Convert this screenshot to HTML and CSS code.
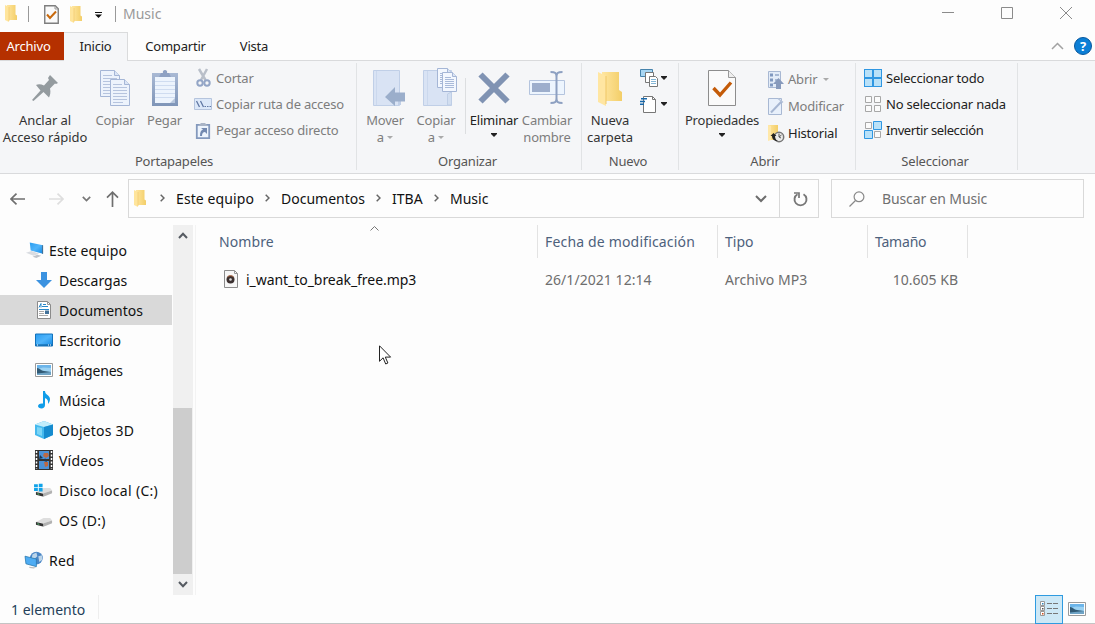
FILE: index.html
```
<!DOCTYPE html>
<html lang="es">
<head>
<meta charset="utf-8">
<title>Music</title>
<link rel="stylesheet" href="styles.css">
</head>
<body>
<svg class="defs" width="0" height="0" aria-hidden="true">
  <defs>
    <linearGradient id="gFold" x1="0" x2="1"><stop offset="0" stop-color="#ffe6a0"/><stop offset="1" stop-color="#f3ce68"/></linearGradient>
    <linearGradient id="gBlue" x1="0" y1="0" x2="1" y2="1"><stop offset="0" stop-color="#2a9df0"/><stop offset=".5" stop-color="#4fb4fb"/><stop offset="1" stop-color="#1187e2"/></linearGradient>
    <linearGradient id="gClip" x1="0" y1="0" x2="0" y2="1"><stop offset="0" stop-color="#a9b9d4"/><stop offset="1" stop-color="#7f95b8"/></linearGradient>
    <symbol id="folder" viewBox="0 0 14 18"><path d="M3 1h8.500v9.500l1.500 1V16H3z" fill="url(#gFold)"/><path d="M1 1l4 2v15l-4-2z" fill="#ffe59c"/><path d="M5 3v14" stroke="#eec565" stroke-width=".6"/></symbol>
    <symbol id="page" viewBox="0 0 20 27"><path d="M.5.500h14l5 5v21H.5z" fill="#edf3fc" stroke="#a5b6d6"/><path d="M14.500.500v5h5" fill="#dbe5f5" stroke="#a5b6d6"/><path d="M3 5.500h9M3 8.500h14M3 11.500h14M3 14.500h14M3 17.500h14M3 20.500h14M3 23.500h10" stroke="#b6c4de"/></symbol>
    <symbol id="pageSmall" viewBox="0 0 15 20"><path d="M.5.500h10l4 4v15H.5z" fill="#f3f7fe" stroke="#a5b6d6"/><path d="M10.500.500v4h4" fill="#dbe5f5" stroke="#a5b6d6"/><path d="M3 5.500h6M3 7.500h9M3 9.500h9M3 11.500h9M3 13.500h9M3 15.500h9" stroke="#a9bad9"/></symbol>
    <symbol id="picture" viewBox="0 0 18 14"><path d="M.5.500h17v13H.5z" fill="#fff" stroke="#9a9a9a"/><path d="M2 2h14v10H2z" fill="#9bd2f3"/><path d="M2 2h14v3L8 4.500 2 6z" fill="#6cb5ea"/><path d="M2 5c3 0 4 3 7 3l7 1v3H2z" fill="#315a75"/><path d="M2 10.500l14-1.500v3H2z" fill="#6fa4c6"/></symbol>
    <symbol id="drive" viewBox="0 0 19 10"><path d="M1 5l8-4h7l2 2.500-9 3z" fill="#dedede"/><path d="M1 5l8 2v3l-8-2z" fill="#333"/><path d="M9 6.500l9-3v3L9 10z" fill="#b2b2b2"/><path d="M2.500 7l2 .5" stroke="#57d27d"/></symbol>
  </defs>
</svg>
<div class="window">
  <header class="titlebar">
    <svg class="tb-folder" width="14" height="18"><use href="#folder"/></svg>
    <i class="tb-line"></i>
    <svg class="tb-props" width="15" height="19" viewBox="0 0 15 19"><path d="M.75.75h10.500l3 3v14.500H.75z" fill="#fafafa" stroke="#7e7e7e" stroke-width="1.400"/><path d="M11 1v3h3" fill="none" stroke="#999"/><path d="M3 9.500l3 3.500 6-6.500" fill="none" stroke="#c8690c" stroke-width="2"/></svg>
    <svg class="tb-folder2" width="14" height="18"><use href="#folder"/></svg>
    <svg class="tb-more" width="7" height="6" viewBox="0 0 7 6"><path d="M0 .5h7" stroke="#111"/><path d="M0 2.500h7L3.500 6z" fill="#111"/></svg>
    <i class="tb-line tb-line2"></i>
    <span class="tb-title">Music</span>
    <div class="controls">
      <svg width="12" height="13" viewBox="0 0 12 13"><path d="M0 5.500h12" stroke="#8b8b8b"/></svg>
      <svg width="12" height="12" viewBox="0 0 12 12"><path d="M.5.500h11v11H.5z" fill="none" stroke="#8b8b8b"/></svg>
      <svg width="12" height="12" viewBox="0 0 12 12"><path d="M0 0l12 12M12 0L0 12" stroke="#8b8b8b"/></svg>
    </div>
  </header>

  <nav class="tabs">
    <span class="tab tab-file">Archivo</span>
    <span class="tab tab-active">Inicio</span>
    <span class="tab tab-share">Compartir</span>
    <span class="tab tab-view">Vista</span>
    <div class="tabs-end">
      <svg width="13" height="8" viewBox="0 0 13 8"><path d="M1 7l5.500-5.500L12 7" fill="none" stroke="#a2a2a2" stroke-width="1.500"/></svg>
      <span class="help">?</span>
    </div>
  </nav>

  <section class="ribbon">
    <div class="group g-clip">
      <div class="tools">
        <div class="big w90">
          <svg class="ico" width="26" height="38" viewBox="0 0 26 38"><path d="M18 7l8 8-2 1-1-.5-5 5c1 4 0 7-1 9l-5.500-5.500L1.500 33 0 32l8.500-9.500L4 17c2-1 5-1 8 .5l5-5.500-1-2z" fill="#949b9f"/></svg>
          <span class="wide">Anclar al<br>Acceso rápido</span>
        </div>
        <div class="big dim w50">
          <svg class="ico" width="31" height="38" viewBox="0 0 31 38"><use href="#page" x="0" y="2" width="20" height="27"/><use href="#page" x="10" y="11" width="20" height="27"/></svg>
          <span>Copiar</span>
        </div>
        <div class="big dim w49">
          <svg class="ico" width="26" height="38" viewBox="0 0 26 38"><path d="M0 5h26v33H0z" fill="url(#gClip)"/><path d="M3 9h20v26H3z" fill="#edf4fd"/><path d="M3 13.500h20M3 17.500h20M3 21.500h20M3 25.500h20M3 29.500h20" stroke="#cfdcf0"/><path d="M18 35l5-5v5z" fill="#b8c7dd"/><path d="M7 9l2-4h2a2.200 2.200 0 1 1 4 0h2l2 4z" fill="#8ea1c3"/></svg>
          <span>Pegar</span>
        </div>
        <div class="rows dim clip-rows">
          <div class="row"><svg width="18" height="20" viewBox="0 0 18 20"><path d="M5 1l6.500 11M13 1L7 12" stroke="#b9bfc9" stroke-width="2.500"/><circle cx="6" cy="15" r="2.700" fill="none" stroke="#93a5c6" stroke-width="2"/><circle cx="13" cy="15" r="2.700" fill="none" stroke="#93a5c6" stroke-width="2"/></svg><span>Cortar</span></div>
          <div class="row"><svg width="18" height="12" viewBox="0 0 18 12"><path d="M.5.500h17v11H.5z" fill="#dce8f9" stroke="#b5c4dd"/><path d="M2.500 3l3 6M6.500 3l3 6" stroke="#6178a4" stroke-width="1.300"/><path d="M10.500 8.500h1.500m1 0h1.500m1 0H17" stroke="#6178a4"/></svg><span>Copiar ruta de acceso</span></div>
          <div class="row"><svg width="18" height="19" viewBox="0 0 18 19"><path d="M2.800 3.800h12.400v13.400H2.800z" fill="#edf4fd" stroke="#8499bd" stroke-width="1.800"/><path d="M5 4l2-2h4l2 2v1H5z" fill="#a9b4c6"/><path d="M6 15c0-4 1-6 3-6.500L7 7h6v6l-2-2c-2 0-3 1.500-3 4z" fill="#7389b0"/></svg><span>Pegar acceso directo</span></div>
        </div>
      </div>
      <div class="caption cap-clip">Portapapeles</div>
    </div>

    <div class="group g-org">
      <div class="tools">
        <div class="big dim w50">
          <svg class="ico shift" width="34" height="38" viewBox="0 0 34 38"><path d="M1.500 2.500h26v35h-26z" fill="#d9e3f4" stroke="#c0cfe7"/><path d="M4.500 3v34" stroke="#cbd8ed"/><path d="M27.500 25v12" stroke="#c0cfe7" stroke-width="3"/><path d="M13 29l10-10v5.500h10v9H23V38z" fill="#9baecb"/></svg>
          <span>Mover<br>a <svg class="arr" width="6" height="3" viewBox="0 0 6 3"><path d="M0 0h6L3 3z" fill="#aaa"/></svg></span>
        </div>
        <div class="big dim w52">
          <svg class="ico shift" width="34" height="38" viewBox="0 0 34 38"><path d="M.5 2.500h28v35H.5z" fill="#d9e3f4" stroke="#c0cfe7"/><path d="M4.500 3v34" stroke="#cbd8ed"/><path d="M24.500 37V26l4-2v13z" fill="#d2def0" stroke="#bfcee6"/><use href="#pageSmall" x="14" y="0" width="15" height="20"/><use href="#pageSmall" x="19" y="4" width="15" height="20"/></svg>
          <span>Copiar<br>a <svg class="arr" width="6" height="3" viewBox="0 0 6 3"><path d="M0 0h6L3 3z" fill="#aaa"/></svg></span>
        </div>
        <i class="sep"></i>
        <div class="big w52 black">
          <svg class="ico" width="32" height="38" viewBox="0 0 32 38"><path d="M2.500 6.500l27 27M29.500 6.500l-27 27" stroke="#8093b3" stroke-width="6"/></svg>
          <span>Eliminar<br><svg class="arr arr-b" width="6" height="4" viewBox="0 0 6 4"><path d="M0 0h6v1L3 4 0 1z" fill="#222"/></svg></span>
        </div>
        <div class="big dim w54">
          <svg class="ico" width="36" height="38" viewBox="0 0 36 38"><path d="M.5 12.500h35v14H.5z" fill="#edf5fe" stroke="#b4c4de"/><path d="M3 15h18v9H3z" fill="#9daecc"/><path d="M21.500 4c5 0 6 1 6 5v21c0 4-1 5-6 5M33.500 4c-5 0-6 1-6 5v21c0 4 1 5 6 5" fill="none" stroke="#8da0c1" stroke-width="2"/></svg>
          <span>Cambiar<br>nombre</span>
        </div>
      </div>
      <div class="caption">Organizar</div>
    </div>

    <div class="group g-new">
      <div class="tools">
        <div class="big w56">
          <svg class="ico" width="25" height="38" viewBox="0 0 25 38"><path d="M4 4h17v18l3 2v9H4z" fill="url(#gFold)"/><path d="M0 4l8 4v30l-8-4z" fill="#ffe6a2"/><path d="M8 8v28" stroke="#efc766"/></svg>
          <span class="wide">Nueva<br>carpeta</span>
        </div>
        <div class="new-rows">
          <div class="row"><svg width="19" height="19" viewBox="0 0 19 19"><path d="M.5.500h12v7H.5z" fill="#a8d6f3" stroke="#4683ac"/><path d="M5.500 3.500h8v10h-8z" fill="#fff" stroke="#777"/><path d="M9.500 7.500h6l2 2v8h-8z" fill="#fff" stroke="#777"/><path d="M11 10.500h5m-5 2h5m-5 2h5" stroke="#83b6d7"/></svg><svg class="arr" width="6" height="4" viewBox="0 0 6 4"><path d="M0 0h6v1L3 4 0 1z" fill="#222"/></svg></div>
          <div class="row"><svg width="19" height="19" viewBox="0 0 19 19"><path d="M3.500 1.500h9l3 3v13h-12z" fill="#fff" stroke="#777"/><path d="M12.500 1.500v3h3" fill="none" stroke="#777"/><path d="M1 3.700h6M0 6.500h5M-1 9.200h5" stroke="#1769ac" stroke-width="1.500"/></svg><svg class="arr" width="6" height="4" viewBox="0 0 6 4"><path d="M0 0h6v1L3 4 0 1z" fill="#222"/></svg></div>
        </div>
      </div>
      <div class="caption cap-new">Nuevo</div>
    </div>

    <div class="group g-open">
      <div class="tools">
        <div class="big w86">
          <svg class="ico" width="28" height="38" viewBox="0 0 28 38"><path d="M.5 2.500h20l7 7v28H.5z" fill="#fafafa" stroke="#8d8d8d"/><path d="M20.500 2.500v7h7" fill="#eee" stroke="#999"/><path d="M5.500 20l6.500 7L23 14.500" fill="none" stroke="#c45b08" stroke-width="3.400"/></svg>
          <span>Propiedades<br><svg class="arr arr-b" width="6" height="4" viewBox="0 0 6 4"><path d="M0 0h6v1L3 4 0 1z" fill="#222"/></svg></span>
        </div>
        <div class="rows open-rows">
          <div class="row dim"><svg width="18" height="19" viewBox="0 0 18 19"><path d="M1.500 1.500h12v16h-12z" fill="#e3ecf8" stroke="#a8b8d3"/><path d="M3 3.500h3v3H3zm0 5h3v3H3zm0 5h3v3H3z" fill="#8098bf"/><path d="M8 5h4M8 10h4" stroke="#92a6c7" stroke-width="1.500"/><path d="M9 19v-5H6l5.500-6 5.500 6h-3v5z" fill="#879abc"/></svg><span>Abrir</span><svg class="arr arr-open" width="6" height="3" viewBox="0 0 6 3"><path d="M0 0h6L3 3z" fill="#aaa"/></svg></div>
          <div class="row dim"><svg width="18" height="19" viewBox="0 0 18 19"><path d="M1.500 1.500h13v16h-13z" fill="#e8f0fb" stroke="#a8b8d3"/><path d="M4 15.500L15 4" stroke="#a6b6d2" stroke-width="2"/><path d="M11 1.500l5 4" stroke="#b5c3da" stroke-width="1.500"/></svg><span>Modificar</span></div>
          <div class="row black"><svg width="18" height="19" viewBox="0 0 18 19"><path d="M1 1h10v15H1z" fill="url(#gFold)"/><path d="M1 1l3 1v14l-3 1z" fill="#ffe8a9"/><circle cx="12" cy="13" r="4.700" fill="#ebebeb" stroke="#757575" stroke-width="1.500"/><path d="M12 9.500V13l2.500-2M12 13l2 1" stroke="#555" fill="none"/><path d="M3.500 12l3-3 3 3H8c0 3 1 4 3 5-4 0-6-2-6-5z" fill="#222"/></svg><span>Historial</span></div>
        </div>
      </div>
      <div class="caption">Abrir</div>
    </div>

    <div class="group g-sel">
      <div class="tools">
        <div class="rows black">
          <div class="row"><svg width="18" height="18" viewBox="0 0 18 18"><path d="M0 0h18v18H0z" fill="#2f97e2"/><path d="M1 1h7v7H1zm9 0h7v7h-7zm-9 9h7v7H1zm9 0h7v7h-7z" fill="#b9e1f8"/></svg><span>Seleccionar todo</span></div>
          <div class="row"><svg width="18" height="18" viewBox="0 0 18 18"><path d="M1.500 1.500h6v6h-6zm9 0h6v6h-6zm-9 9h6v6h-6zm9 0h6v6h-6z" fill="#fbfbfb" stroke="#a7a7a7"/></svg><span>No seleccionar nada</span></div>
          <div class="row"><svg width="18" height="18" viewBox="0 0 18 18"><path d="M1.500 1.500h6v6h-6zm9 9h6v6h-6z" fill="#fbfbfb" stroke="#a7a7a7"/><path d="M9.500.500h8v8h-8zM.5 9.500h8v8h-8z" fill="#b9e1f8" stroke="#2f97e2"/></svg><span class="sp-inv">Invertir selección</span></div>
        </div>
      </div>
      <div class="caption">Seleccionar</div>
    </div>
  </section>

  <section class="address">
    <div class="nav-buttons">
      <svg width="15" height="12" viewBox="0 0 15 12"><path d="M15 6H1m5.500-5.300L1 6l5.500 5.300" fill="none" stroke="#6f6f6f" stroke-width="1.700"/></svg>
      <svg class="fwd" width="15" height="12" viewBox="0 0 15 12"><path d="M0 6h14M8.500.700L14 6l-5.500 5.300" fill="none" stroke="#dedede" stroke-width="1.700"/></svg>
      <svg class="recent" width="9" height="6" viewBox="0 0 9 6"><path d="M.8.800l3.700 3.700L8.200.800" fill="none" stroke="#777" stroke-width="1.700"/></svg>
      <svg class="up" width="13" height="16" viewBox="0 0 13 16"><path d="M6.500 16V1.200M1 6.700l5.500-5.500L12 6.700" fill="none" stroke="#6f6f6f" stroke-width="1.700"/></svg>
    </div>
    <div class="path">
      <svg class="path-folder" width="14" height="18"><use href="#folder"/></svg>
      <svg class="chev" width="5" height="8" viewBox="0 0 5 8"><path d="M.7.700L4 4 .7 7.300" fill="none" stroke="#666" stroke-width="1.500"/></svg>
      <span class="c1">Este equipo</span>
      <svg class="chev" width="5" height="8" viewBox="0 0 5 8"><path d="M.7.700L4 4 .7 7.300" fill="none" stroke="#666" stroke-width="1.500"/></svg>
      <span class="c2">Documentos</span>
      <svg class="chev" width="5" height="8" viewBox="0 0 5 8"><path d="M.7.700L4 4 .7 7.300" fill="none" stroke="#666" stroke-width="1.500"/></svg>
      <span class="c3">ITBA</span>
      <svg class="chev" width="5" height="8" viewBox="0 0 5 8"><path d="M.7.700L4 4 .7 7.300" fill="none" stroke="#666" stroke-width="1.500"/></svg>
      <span class="c4">Music</span>
      <svg class="path-drop" width="12" height="8" viewBox="0 0 12 8"><path d="M1 1l5 5 5-5" fill="none" stroke="#6d6d6d" stroke-width="2"/></svg>
      <div class="refresh"><svg width="15" height="15" viewBox="0 0 15 15"><path d="M10.500 2.200a6 6 0 1 1-6 0" fill="none" stroke="#777" stroke-width="1.900"/><path d="M1 1h5v5" fill="none" stroke="#777" stroke-width="1.700"/></svg></div>
    </div>
    <div class="search">
      <svg width="16" height="16" viewBox="0 0 16 16"><circle cx="10" cy="5.800" r="4.900" fill="none" stroke="#898989" stroke-width="1.200"/><path d="M6.500 9.500L.5 15.500" stroke="#898989" stroke-width="1.300"/></svg>
      <span>Buscar en Music</span>
    </div>
  </section>

  <main class="body">
    <aside class="tree">
      <div class="item root"><svg width="20" height="18" viewBox="0 0 20 18"><path d="M5 1l14 3v9L6 9.500z" fill="url(#gBlue)"/><path d="M18.500 4v9" stroke="#486e8c"/><path d="M1 12l6-2 8 3-6 2z" fill="#d9dce1"/><path d="M8 16l5-2 4 1-5 2.500z" fill="#bfc3ca"/></svg><span class="ls2">Este equipo</span></div>
      <div class="item"><svg width="18" height="18" viewBox="0 0 18 18"><path d="M6 1h6v8h5l-8 8-8-8h5z" fill="#3b92e0"/></svg><span class="ls1">Descargas</span></div>
      <div class="item selected"><svg width="18" height="18" viewBox="0 0 18 18"><path d="M2.500.500h10l3 3v14h-13z" fill="#fff" stroke="#8b8b8b"/><path d="M12.500.500v3h3" fill="none" stroke="#999"/><path d="M4 6.500l2-4v4m2-3h3M7 5.500h6M4 8.500h10" stroke="#2787c9" fill="none"/><path d="M4 10.500h5m-5 2h5m-5 2h9" stroke="#aaa"/><path d="M10 9.500h4v3.500h-4z" fill="#43729a"/></svg><span class="ls1">Documentos</span></div>
      <div class="item"><svg width="18" height="18" viewBox="0 0 18 18"><path d="M.5 3h17v12H.5z" fill="url(#gBlue)" stroke="#1472bb"/><path d="M1 14h16" stroke="#085d9b"/><path d="M2 14h1m10 0h1m1 0h1" stroke="#fff"/></svg><span class="ls1">Escritorio</span></div>
      <div class="item"><svg width="18" height="14"><use href="#picture"/></svg><span>Imágenes</span></div>
      <div class="item"><svg width="18" height="18" viewBox="0 0 18 18"><path d="M8 0h2c0 4 5 4 5 8 0 2-1 4-2 5 .5-4-1-5-3-6v7c0 2-1.500 3.500-3.500 3.500S3 16.500 3 15s2-3 5-2.500z" fill="#109de9"/></svg><span class="ls1">Música</span></div>
      <div class="item"><svg width="18" height="18" viewBox="0 0 18 18"><path d="M0 3.500L9 0l9 3.500V14l-9 4-9-4z" fill="#45b9ee"/><path d="M0 3.500L9 0l9 3.500L9 6z" fill="#c2edfb"/><path d="M9 6l9-2.500V14l-9 4z" fill="#168bce"/><path d="M2 6l5 1v8l-5-2z" fill="#7bd5f6"/></svg><span class="ls3">Objetos 3D</span></div>
      <div class="item"><svg width="18" height="20" viewBox="0 0 18 20"><path d="M0 0h18v20H0z" fill="#333"/><path d="M4 1h10v8H4zm0 10h10v8H4z" fill="#4b92d8"/><path d="M9 3h4l1 3-3 2-3-2zM9 12h4v4l-3 1z" fill="#bc6a45"/><path d="M5 5l3 3-4 1zM10 8l2 4-3-1z" fill="#183957"/><path d="M1.500 1v18M16.500 1v18" stroke="#fff" stroke-width="1.500" stroke-dasharray="2 1.500"/></svg><span class="ls3">Vídeos</span></div>
      <div class="item"><svg width="19" height="18" viewBox="0 0 19 18"><use href="#drive" x="0" y="6" width="19" height="10"/><path d="M-1 3h4v3h-4zm5-.5h4v3.500H4zM-1 7h4v3h-4zm5 0h4v3.500H4z" fill="#10a3e9"/></svg><span class="ls4">Disco local (C:)</span></div>
      <div class="item"><svg width="19" height="18" viewBox="0 0 19 18"><use href="#drive" x="0" y="6" width="19" height="10"/></svg><span class="ls4">OS (D:)</span></div>
      <div class="item root net"><svg width="20" height="20" viewBox="0 0 20 20"><circle cx="12" cy="8" r="6.700" fill="#4a86c6"/><path d="M8 4l4-2 1 4-3 3-3-1zM14 6l4-1v5l-3 2z" fill="#bcd5e9"/><path d="M0 6l12 3v8L1 14z" fill="#4eacf3" stroke="#2877ac" stroke-width=".8"/><path d="M4 17l8 1-3 1-4-.5z" fill="#bbb"/></svg><span class="ls3">Red</span></div>
    </aside>
    <div class="scroll">
      <div class="sb-btn"><svg width="10" height="7" viewBox="0 0 10 7"><path d="M1 6l4-4.300L9 6" fill="none" stroke="#555a61" stroke-width="2"/></svg></div>
      <div class="sb-track"><div class="sb-thumb"></div></div>
      <div class="sb-btn"><svg width="10" height="7" viewBox="0 0 10 7"><path d="M1 1l4 4.300L9 1" fill="none" stroke="#555a61" stroke-width="2"/></svg></div>
    </div>
    <section class="files">
      <div class="head">
        <span class="h h-name">Nombre<svg class="sort" width="9" height="5" viewBox="0 0 9 5"><path d="M.5 4.500l4-4 4 4" fill="none" stroke="#777"/></svg></span>
        <span class="h h-date">Fecha de modificación</span>
        <span class="h h-type">Tipo</span>
        <span class="h h-size">Tamaño</span>
      </div>
      <div class="file">
        <span class="f-name"><svg width="14" height="18" viewBox="0 0 14 18"><path d="M.5.500h10l3 3v14H.5z" fill="#f7f7f7" stroke="#8c8c8c"/><path d="M10.500.500v3h3" fill="none" stroke="#999"/><circle cx="6.500" cy="9.500" r="4" fill="#3b3030"/><path d="M3.500 7a4 4 0 0 1 6 0" fill="none" stroke="#b86c44"/><circle cx="6.500" cy="9.500" r="1.300" fill="#ddd"/></svg><b>i_want_to_break_free.mp3</b></span>
        <span class="f-date">26/1/2021 12:14</span>
        <span class="f-type">Archivo MP3</span>
        <span class="f-size">10.605 KB</span>
      </div>
      <svg class="cursor" width="13" height="20" viewBox="0 0 13 20"><path d="M.5.800v15.500l3.600-3.500 2.600 6.200 2.200-1-2.600-5.900h5.300z" fill="#fff" stroke="#222"/></svg>
    </section>
  </main>

  <footer class="status">
    <span class="count">1 elemento</span>
    <div class="views">
      <div class="view-details"><svg width="18" height="16" viewBox="0 0 18 16"><path d="M.5.500h4v4h-4zm0 5h4v4h-4zm0 5h4v4h-4z" fill="#fff" stroke="#999"/><path d="M2 2h1.500v1.500H2z" fill="#2c83b9"/><path d="M2 7h1.500v1.500H2z" fill="#555"/><path d="M2 12h1.500v1.500H2z" fill="#d44d16"/><path d="M7 2.500h5m1 0h5m-11 5h5m1 0h5m-11 5h5m1 0h5" stroke="#777"/></svg></div>
      <svg width="18" height="14"><use href="#picture"/></svg>
    </div>
  </footer>
</div>
</body>
</html>
```
FILE: styles.css
```
* { box-sizing: border-box; }
body { margin: 0; background: #fdfdfd; color: #111; font: 14px/20px "Noto Sans", sans-serif; letter-spacing: -0.2px; white-space: nowrap; overflow: hidden; }
svg { flex: none; display: block; }
.defs { position: absolute; }
.window { width: 1095px; height: 624px; display: flex; flex-direction: column; border-bottom: 1px solid #c4c4c4; }

.titlebar { height: 32px; display: flex; align-items: flex-start; padding: 4px 23px 0 4px; color: #999; }
.tb-line { width: 1px; height: 16px; background: #999; margin: 2px 0 0 10px; }
.tb-props { margin: 1px 0 0 15px; }
.tb-folder2 { margin: 1px 0 0 10px; }
.tb-more { margin: 8px 0 0 12px; }
.tb-line2 { margin-left: 13px; }
.tb-title { margin-left: 7px; letter-spacing: 0; }
.controls { margin-left: auto; display: flex; gap: 47px; padding-top: 3px; }

.tabs { height: 28px; display: flex; font-size: 13px; color: #222; }
.tab { display: flex; align-items: center; justify-content: center; height: 28px; }
.tab-file { width: 64px; background: #b53000; color: #fff; padding-right: 7px; }
.tab-active { width: 64px; height: 29px; background: #f5f6f8; border: 1px solid #dadbdc; border-left: 0; border-bottom: 0; padding-bottom: 2px; z-index: 1; }
.tab-share { width: 95px; }
.tab-view { width: 62px; }
.tabs-end { margin-left: auto; display: flex; align-items: center; gap: 10px; padding-right: 3px; }
.help { width: 18px; height: 18px; border-radius: 50%; background: #0c7fd6; border: 1px solid #08589e; color: #fff; font: bold 13px/16px "Noto Sans", sans-serif; text-align: center; letter-spacing: 0; }

.ribbon { height: 114px; flex: none; display: flex; background: #f5f6f8; border: 1px solid #d9dadc; border-width: 1px 0; color: #333; font-size: 13px; line-height: 17px; }
.group { display: flex; flex-direction: column; padding-top: 5px; border-right: 1px solid #e1e3e5; margin: 2px 0 3px; }
.g-clip { width: 357px; }
.g-org { width: 225px; padding-left: 3px; }
.g-new { width: 97px; }
.g-open { width: 177px; }
.g-sel { width: 162px; padding-left: 8px; }
.tools { display: flex; height: 86px; }
.caption { text-align: center; color: #555; padding-right: 4px; }
.cap-clip { padding-right: 8px; }
.g-org .caption { padding-right: 6px; }
.g-sel .caption { padding-right: 11px; }
.big { display: flex; flex-direction: column; align-items: center; text-align: center; flex: none; }
.big > span { margin-top: 6px; }
.wide { letter-spacing: -0.05px; }
.w90 { width: 90px; } .w50 { width: 50px; } .w49 { width: 49px; } .w52 { width: 52px; }
.w54 { width: 54px; } .w56 { width: 56px; } .w86 { width: 86px; }
.shift { margin-left: 8px; }
.dim { color: #7d7d7d; }
.black { color: #222; }
.arr { display: inline-block; vertical-align: 3px; }
.arr-b { vertical-align: 5px; }
.sep { width: 1px; height: 56px; background: #dcdee0; margin: 10px 2px 0 3px; }
.rows .row { display: flex; align-items: center; height: 26px; gap: 4px; }
.rows { margin-top: -3px; }
.clip-rows { margin-left: 5px; }
.open-rows { margin: -2px 0 0 2px; }
.open-rows .row { height: 27px; gap: 3px; }
.open-rows .arr-open { margin-left: 3px; }
.new-rows { margin: -3px 0 0 2px; }
.new-rows .row { display: flex; align-items: center; height: 26px; gap: 2px; }
.sp-inv { letter-spacing: -0.4px; }

.address { height: 51px; flex: none; display: flex; padding-top: 5px; }
.nav-buttons { width: 128px; height: 39px; display: flex; align-items: center; padding-left: 10px; }
.fwd { margin-left: 24px; }
.recent { margin-left: 18px; }
.up { margin-left: 15px; }
.path { width: 691px; height: 39px; border: 1px solid #d9d9d9; display: flex; align-items: center; padding-left: 4px; }
.path-folder { margin-right: 13px; margin-top: -2px; }
.chev { margin-right: 11px; margin-top: -2px; }
.path span { flex: none; }
.c1 { width: 89px; letter-spacing: 0.1px; } .c2 { width: 95px; letter-spacing: 0; } .c3 { width: 42px; letter-spacing: 0; } .c4 { letter-spacing: 0; }
.path-drop { margin-left: auto; margin-right: 12px; }
.refresh { width: 39px; height: 37px; border-left: 1px solid #d9d9d9; display: flex; align-items: center; justify-content: center; padding: 1px 0 0 2px; }
.search { width: 253px; height: 39px; margin-left: 12px; border: 1px solid #d9d9d9; display: flex; align-items: center; gap: 17px; padding-left: 17px; color: #707070; }
.search span { letter-spacing: -0.13px; }

.body { height: 370px; flex: none; display: flex; }
.tree { width: 173px; padding-top: 10px; }
.item { height: 30px; width: 172px; display: flex; align-items: center; gap: 6px; padding-left: 35px; }
.item > svg { width: 18px; overflow: visible; }
.item > span { padding-top: 2px; }
.ls1 { letter-spacing: 0; } .ls2 { letter-spacing: 0.1px; } .ls3 { letter-spacing: 0.2px; } .ls4 { letter-spacing: 0.3px; }
.root { padding-left: 25px; gap: 5px; }
.item.root > svg { width: 19px; }
.selected { background: #d9d9d9; }
.net { margin-top: 10px; }
.scroll { width: 20px; background: #f0f0f0; display: flex; flex-direction: column; }
.sb-btn { height: 21px; display: flex; align-items: center; justify-content: center; padding-right: 1px; }
.sb-track { flex: 1; display: flex; flex-direction: column; justify-content: flex-end; }
.sb-thumb { height: 166px; width: 19px; background: #cdcdcd; }
.files { position: relative; margin-left: 2px; border-left: 1px solid #f3f3f3; flex: 1; }
.head { display: flex; height: 33px; color: #4d617c; }
.h { border-right: 1px solid #e3e3e3; line-height: 33px; padding-left: 7px; position: relative; }
.h-name { width: 342px; padding-left: 23px; letter-spacing: 0.1px; }
.h-date { width: 180px; letter-spacing: 0.17px; } .h-type { width: 150px; letter-spacing: 0; } .h-size { width: 100px; }
.sort { position: absolute; left: 174px; top: 1px; }
.file { display: flex; align-items: center; height: 30px; margin-top: 7px; color: #6e6e6e; }
.f-name { width: 349px; padding-left: 28px; display: flex; align-items: center; gap: 8px; color: #111; }
.f-name b { font-weight: 400; letter-spacing: -0.05px; }
.f-name svg { margin-top: -3px; }
.f-date { width: 180px; letter-spacing: 0.05px; } .f-type { width: 150px; letter-spacing: 0.05px; } .f-size { width: 83px; text-align: right; letter-spacing: 0; }
.cursor { position: absolute; left: 183px; top: 120px; }

.status { height: 28px; display: flex; color: #24405a; }
.count { width: 99px; border-right: 1px solid #eee; padding-left: 11px; line-height: 30px; height: 24px; letter-spacing: 0; }
.views { margin-left: auto; display: flex; align-items: center; gap: 5px; padding-right: 9px; }
.view-details { width: 28px; height: 29px; border: 1px solid #2f9be0; background: #cde8f6; display: flex; align-items: center; justify-content: center; }
```
